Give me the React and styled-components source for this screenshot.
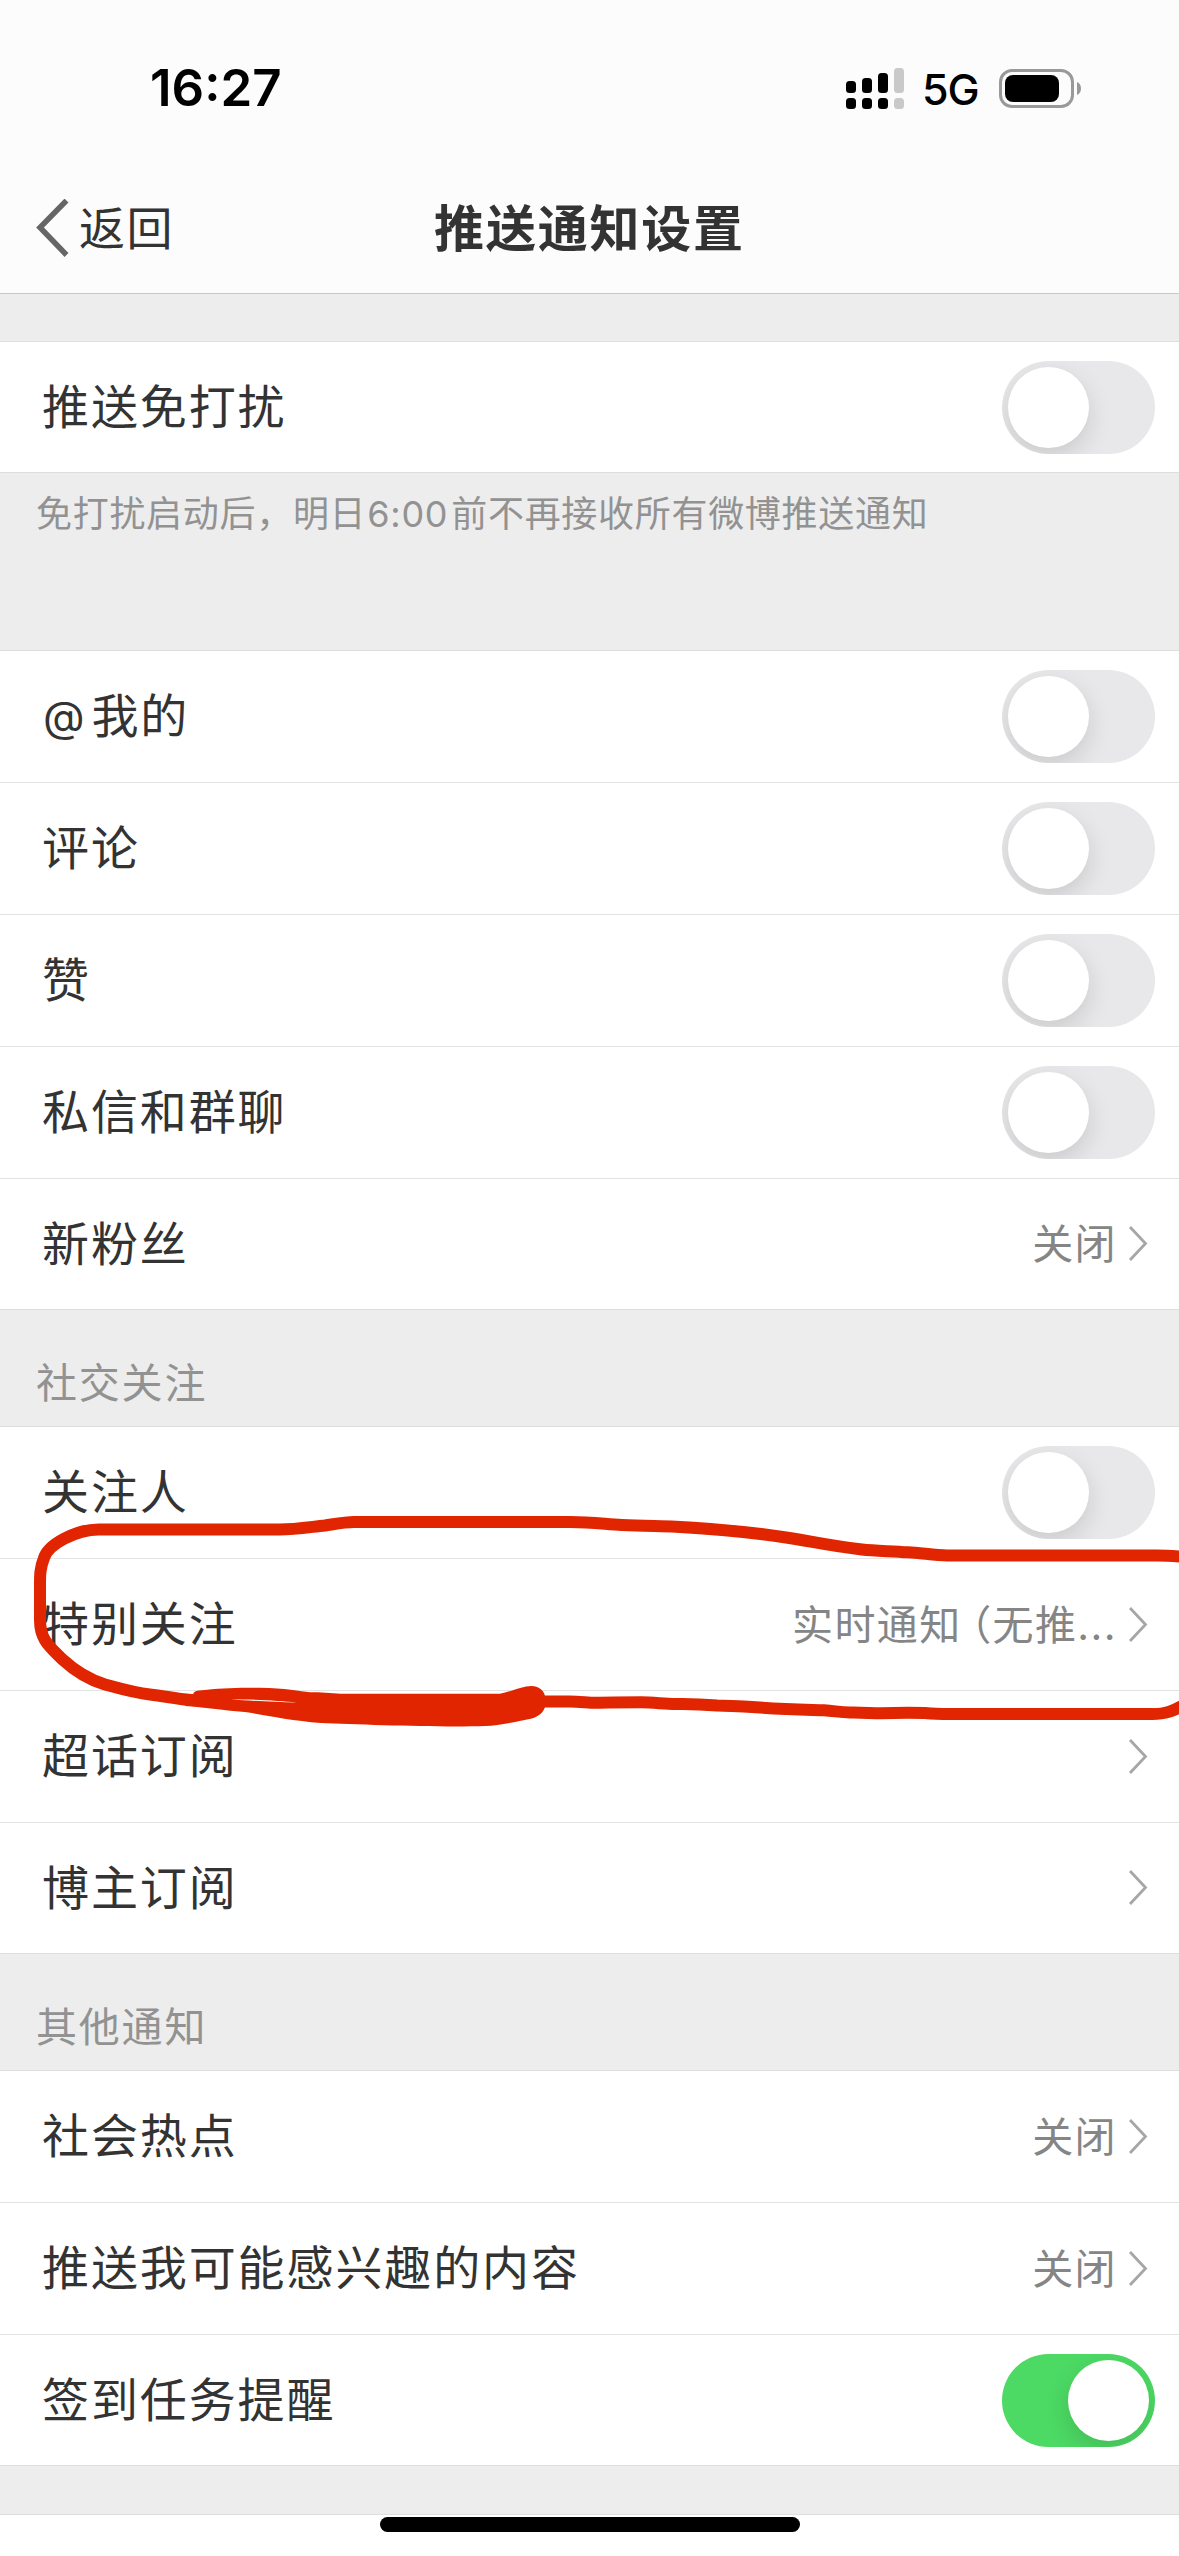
import React from 'react';
import styled, { createGlobalStyle } from 'styled-components';

const GlobalStyle = createGlobalStyle`
  * {
    box-sizing: border-box;
  }

  body {
    margin: 0;
    background: #fff;
    font-family: Inter, 'Noto Sans CJK SC', sans-serif;
    color: #333;
  }
`;

const Screen = styled.div`
  position: relative;
  width: 1179px;
  height: 2556px;
  overflow: hidden;
  background: #ededed;
  display: flex;
  flex-direction: column;
`;

const Header = styled.header`
  flex: none;
  height: 294px;
  background: #fcfcfc;
  border-bottom: 1px solid #c8c8c8;
`;

const StatusBar = styled.div`
  height: 162px;
  padding: 14px 98px 0 150px;
  display: flex;
  align-items: center;
  color: #000;
`;

const Time = styled.span`
  margin-right: auto;
  font-size: 51px;
  font-weight: 600;
  line-height: 60px;
`;

const Signal = styled.svg`
  width: 58px;
  height: 41px;
`;

const Network = styled.span`
  width: 58px;
  margin: 2px 19px 0 18px;
  font-size: 43px;
  font-weight: 450;
  line-height: 50px;
  letter-spacing: -1px;
`;

const Battery = styled.svg`
  width: 82px;
  height: 39px;
`;

const NavBar = styled.nav`
  height: 131px;
  padding: 0 35px;
  display: grid;
  grid-template-columns: 1fr auto 1fr;
  align-items: center;
`;

const Back = styled.a`
  display: flex;
  align-items: center;
  gap: 10px;
  font-size: 46px;
  line-height: 60px;
  letter-spacing: 1.5px;
`;

const BackIcon = styled.svg`
  width: 34px;
  height: 58px;
`;

const Title = styled.h1`
  margin: 0;
  padding-top: 2px;
  font-size: 50px;
  font-weight: 700;
  line-height: 60px;
  letter-spacing: 1.8px;
`;

const List = styled.ul`
  flex: none;
  margin: 0;
  padding: 0;
  list-style: none;
  background: #fff;
  border-top: 1px solid #dedede;
  border-bottom: 1px solid #dedede;
`;

const Item = styled.li`
  height: 132px;
  padding: 0 24px 0 42px;
  display: flex;
  align-items: center;
  justify-content: space-between;
  border-bottom: 1px solid #e3e3e3;

  &:last-child {
    height: 130px;
    border-bottom: 0;
  }
`;

const Label = styled.span`
  padding-bottom: 1px;
  font-size: 47px;
  line-height: 60px;
  letter-spacing: 1.9px;
`;

const At = styled.span`
  margin: 0 5px 0 1px;
  font-size: 43px;
  vertical-align: 1px;
`;

const Detail = styled.span`
  padding-right: 7px;
  display: flex;
  align-items: center;
  gap: 12px;
`;

const Value = styled.span`
  font-size: 41px;
  line-height: 56px;
  letter-spacing: 1.4px;
  color: #858585;
`;

const Bracket = styled.span`
  margin-left: 9px;
  font-feature-settings: 'halt';
`;

const Arrow = styled.svg`
  width: 19px;
  height: 36px;
`;

const Track = styled.span`
  width: 153px;
  height: 93px;
  padding: 6px;
  border-radius: 47px;
  overflow: hidden;
  display: flex;
  justify-content: ${props => (props.$on ? 'flex-end' : 'flex-start')};
  background: ${props => (props.$on ? '#4cd964' : '#e8e8ea')};
`;

const Knob = styled.span`
  width: 81px;
  height: 81px;
  border-radius: 50%;
  background: #fff;
  box-shadow: 0 9px 24px rgba(0, 0, 0, 0.13);
`;

const Gap = styled.div`
  flex: none;
  height: ${props => props.$height}px;
`;

const Note = styled.p`
  flex: none;
  height: 177px;
  margin: 0;
  padding: 16px 36px 0;
  font-size: 36px;
  line-height: 50px;
  letter-spacing: 0.7px;
  color: #929292;
`;

const Clock = styled.span`
  margin: 0 3px 0 1px;
`;

const Caption = styled.h2`
  flex: none;
  height: 116px;
  margin: 0;
  padding: 45px 36px 0;
  font-size: 41px;
  font-weight: 400;
  line-height: 56px;
  letter-spacing: 1.8px;
  color: #929292;
`;

const Footer = styled.footer`
  flex: 1;
  padding-top: 2px;
  background: #fff;
  border-top: 1px solid #dedede;
`;

const HomeIndicator = styled.div`
  width: 420px;
  height: 15px;
  margin: 0 auto;
  border-radius: 8px;
  background: #000;
`;

const Marker = styled.svg`
  position: absolute;
  left: 0;
  top: 1500px;
  width: 1179px;
  height: 250px;
  pointer-events: none;
`;

const Toggle = ({ on }) =>
  (<Track $on={on}>
    <Knob />
  </Track>);

const Row = ({ label, value, toggle, on }) =>
  (<Item>
    <Label>{label}</Label>
    {toggle
      ? <Toggle on={on} />
      : <Detail>
        <Value>{value}</Value>
        <Arrow viewBox="0 0 19 36" fill="none" stroke="#a6a6a6" strokeWidth="2.8">
          <path d="M1 1L16.5 17.5L1 34" />
        </Arrow>
      </Detail>}
  </Item>);

export default () =>
  (<Screen>
    <GlobalStyle />
    <Header>
      <StatusBar>
        <Time>16:27</Time>
        <Signal viewBox="0 0 58 41">
          <rect x="0" y="13" width="10" height="12" rx="3.5" />
          <rect x="16" y="10" width="10" height="15" rx="3.5" />
          <rect x="32" y="5" width="10" height="20" rx="3.5" />
          <rect x="48" y="0" width="10" height="25" rx="3.5" fill="#c9c9c9" />
          <rect x="0" y="30" width="10" height="11" rx="3.5" />
          <rect x="16" y="30" width="10" height="11" rx="3.5" />
          <rect x="32" y="30" width="10" height="11" rx="3.5" />
          <rect x="48" y="30" width="10" height="11" rx="3.5" fill="#c9c9c9" />
        </Signal>
        <Network>5G</Network>
        <Battery viewBox="0 0 82 39">
          <rect x="1.5" y="1.5" width="72" height="36" rx="11.5" fill="none" stroke="#999" strokeWidth="3" />
          <rect x="6" y="6" width="54" height="27" rx="8" />
          <path d="M78 13C80.6 14 82 16.5 82 19.5C82 22.5 80.6 25 78 26Z" fill="#999" />
        </Battery>
      </StatusBar>
      <NavBar>
        <Back>
          <BackIcon viewBox="0 0 34 58" fill="none" stroke="#666" strokeWidth="5.5">
            <path d="M31.5 1.5L5 28.5L31.5 56" />
          </BackIcon>
          返回
        </Back>
        <Title>推送通知设置</Title>
      </NavBar>
    </Header>
    <Gap $height={47} />
    <List>
      <Row label="推送免打扰" toggle />
    </List>
    <Note>免打扰启动后，明日<Clock>6:00</Clock>前不再接收所有微博推送通知</Note>
    <List>
      <Row label={<><At>@</At>我的</>} toggle />
      <Row label="评论" toggle />
      <Row label="赞" toggle />
      <Row label="私信和群聊" toggle />
      <Row label="新粉丝" value="关闭" />
    </List>
    <Caption>社交关注</Caption>
    <List>
      <Row label="关注人" toggle />
      <Row label="特别关注" value={<>实时通知<Bracket>（</Bracket>无推...</>} />
      <Row label="超话订阅" />
      <Row label="博主订阅" />
    </List>
    <Caption>其他通知</Caption>
    <List>
      <Row label="社会热点" value="关闭" />
      <Row label="推送我可能感兴趣的内容" value="关闭" />
      <Row label="签到任务提醒" toggle on />
    </List>
    <Gap $height={48} />
    <Footer>
      <HomeIndicator />
    </Footer>
    {/* red pen circle round the 特别关注 row */}
    <Marker viewBox="0 1500 1179 250" fill="none" stroke="#e12500" strokeWidth="12" strokeLinejoin="round">
      <path d="M1190 1557.5Q1170 1555.5 1157 1555.5H947C935 1555 920 1553 908 1552.3C890 1551 875 1551 862 1549.5C830 1546 810 1541 786 1537.5C750 1532 710 1528.5 676 1526.7C655 1526 640 1526 622 1525C600 1523.5 590 1522 570 1522H354C345 1522 335 1524 325 1525.5C310 1527 295 1529.4 280 1529.4H99C75 1529.4 48 1545 44 1558C40 1568 40 1575 40 1585V1620C40 1640 50 1647 62 1659C75 1671 90 1680 105 1684.5C125 1690 135 1693 150 1694.5C165 1696 175 1699 191 1700C215 1702 230 1703 250 1706" />
      <path d="M540 1701.5H570C580 1701.5 588 1702.8 596 1702.8C610 1702.3 625 1702.3 641 1702.3C655 1702.6 665 1704 675 1704C690 1703.7 700 1704 717 1705.5C730 1705.8 738 1705.8 748 1706.7C780 1709.3 800 1709.5 824 1710.2C835 1711 840 1712.3 850 1712.5C865 1712.3 870 1713.3 881 1713.3C895 1712.7 915 1712.7 925 1713C935 1714 940 1714.3 957 1714H1152C1165 1714 1172 1712 1187 1703" />
      <path
        fill="#e12500"
        stroke="none"
        d="M193 1696C193 1691 196 1690.5 205 1690C225 1688 235 1687.8 260 1687.8C285 1688 300 1691.5 310 1692.3C325 1692 335 1694 345 1693.8H500C508 1692 516 1689 526 1686.5C538 1684 545 1690 545.5 1699C547 1710 540 1716 532 1718.5C515 1722 500 1725.5 485 1726C440 1727.5 360 1724.5 321 1723C290 1720.5 265 1715 245 1712C220 1710 205 1707.5 185 1706Z"
      />
      <path fill="#fff" stroke="none" d="M231 1699.2C250 1699.2 280 1700.5 297 1702.5C275 1702.1 250 1700.8 231 1699.2Z" />
    </Marker>
  </Screen>);
